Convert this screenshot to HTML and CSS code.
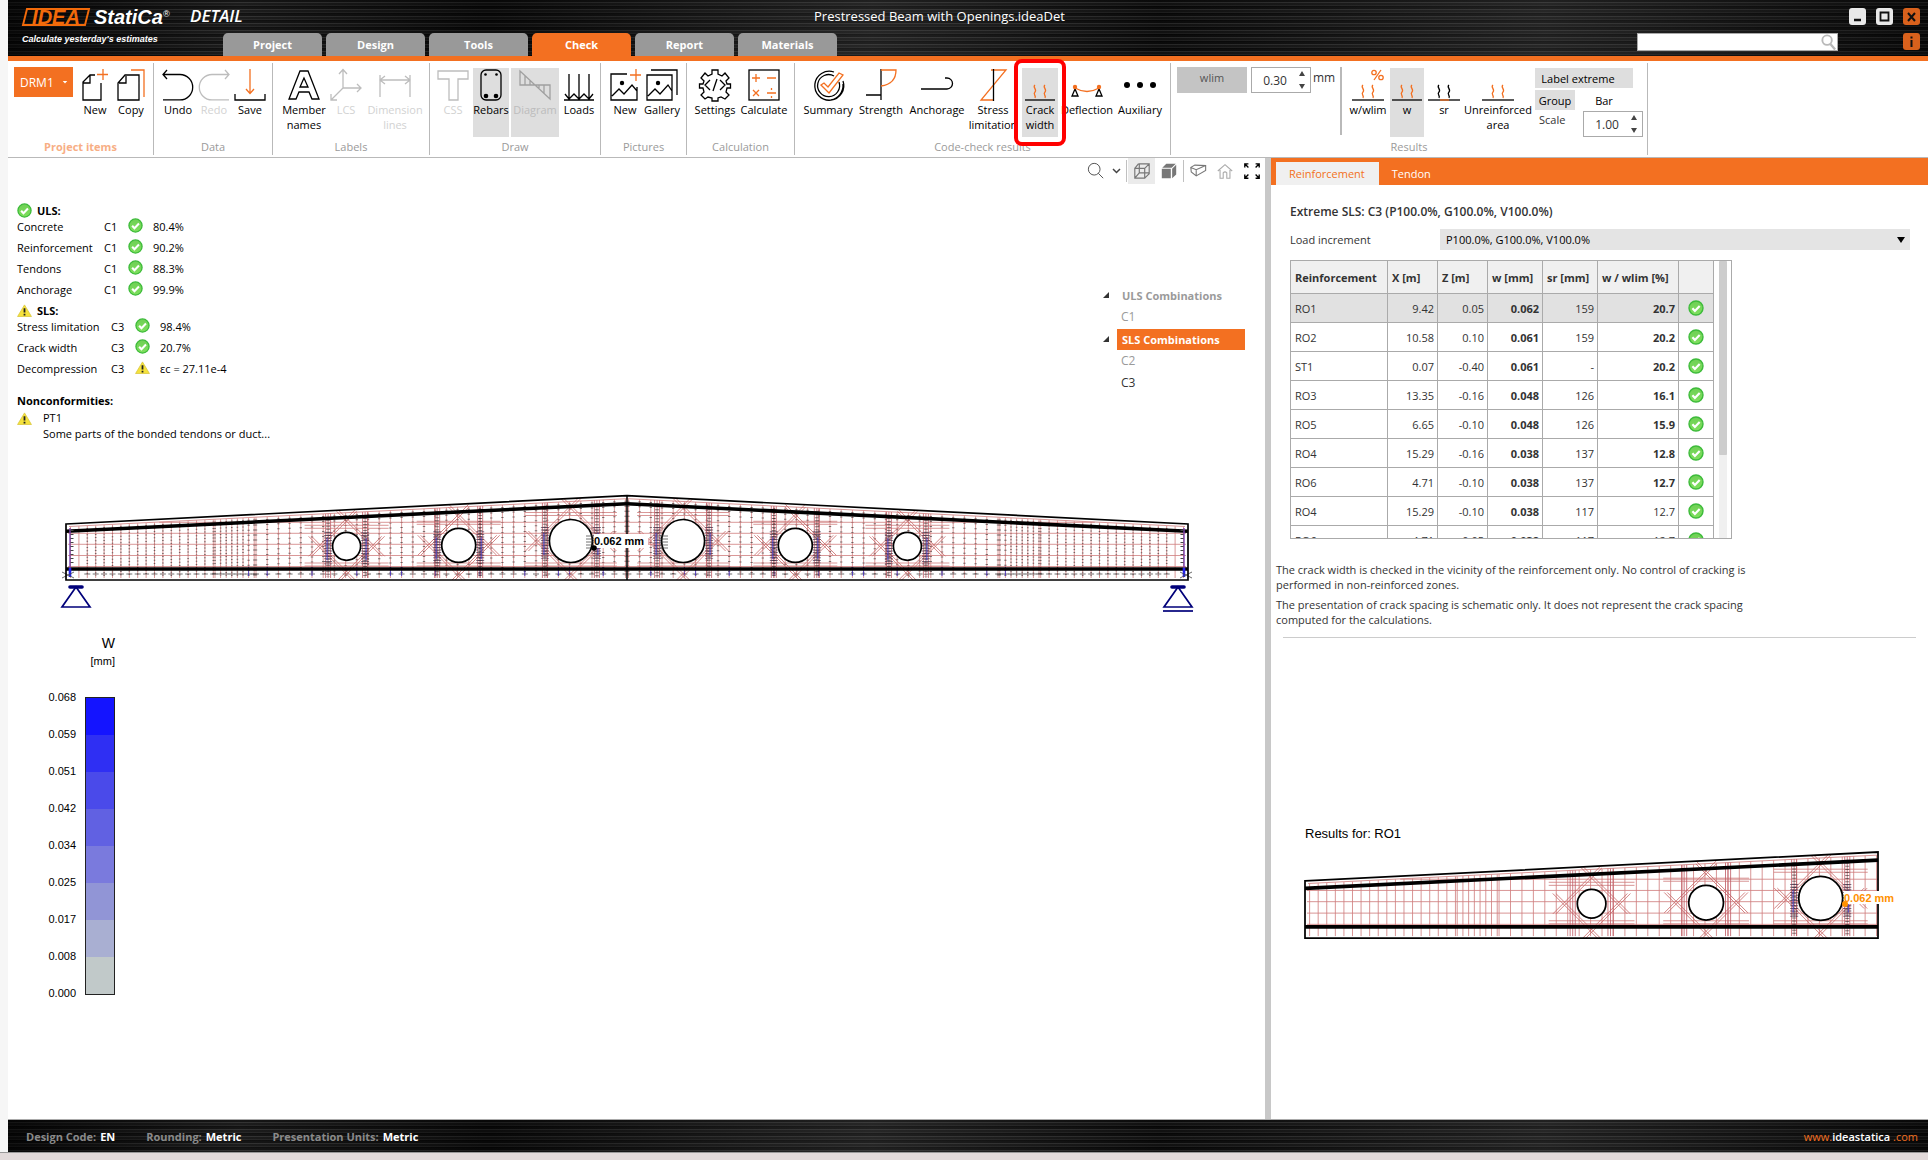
FILE: index.html
```html
<!DOCTYPE html>
<html lang="en">
<head>
<meta charset="utf-8">
<title>Prestressed Beam with Openings.ideaDet</title>
<link rel="stylesheet" href="styles.css">
</head>
<body>
<svg class="defs" aria-hidden="true">
  <defs>
    <linearGradient id="okFill" x1="0" y1="0" x2="0" y2="1"><stop offset="0" stop-color="#6fcf55"/><stop offset="1" stop-color="#7fe05e"/></linearGradient>
    <symbol id="ok" viewBox="0 0 16 16"><circle cx="8" cy="8" r="7" fill="url(#okFill)" stroke="#3dbb3a" stroke-width="1.4"/><path d="M4.4 8.2l2.5 2.7 4.8-5" fill="none" stroke="#fff" stroke-width="2.2"/></symbol>
    <symbol id="warn" viewBox="0 0 16 16"><path d="M8 2l7.4 12.4H.6z" fill="#f5e23c" stroke="#d8c63a" stroke-width=".8"/><path d="M8 5.6v4.6M8 11.4v1.8" stroke="#222" stroke-width="1.9"/></symbol>
    <symbol id="cracks" viewBox="0 0 32 32"><path d="M11 16c-3 2 2.500 4.500 0 7s1.500 3.500 0 6M21 16c-3 2 2.500 4.500 0 7s1.500 3.500 0 6"/></symbol>
    <clipPath id="inside"><path d="M0 44L561 15.7V100H0z"/></clipPath>
  </defs>
</svg>

<div class="app">
  <header class="top">
    <div class="top-row">
      <div class="brand">
        <span class="logo-box"><span class="logo-text">IDEA</span></span>
        <span class="logo-name">StatiCa<sup>®</sup></span>
        <span class="logo-mod">DETAIL</span>
      </div>
      <h1 class="doc-title">Prestressed Beam with Openings.ideaDet</h1>
      <div class="win">
        <button class="win-btn" aria-label="Minimize"><svg viewBox="0 0 17 17"><path d="M5 12h7" stroke="#111" stroke-width="2.500"/></svg></button>
        <button class="win-btn" aria-label="Maximize"><svg viewBox="0 0 17 17"><path d="M4.500 4.500h8v8h-8z" fill="none" stroke="#111" stroke-width="1.800"/></svg></button>
        <button class="win-btn hot" aria-label="Close"><svg viewBox="0 0 17 17"><path d="M5 5l7 8M12 5l-7 8" stroke="#111" stroke-width="2"/></svg></button>
      </div>
    </div>
    <div class="top-row second">
      <p class="tagline">Calculate yesterday's estimates</p>
      <nav class="tabs">
        <a href="#">Project</a><a href="#">Design</a><a href="#">Tools</a><a href="#" class="on">Check</a><a href="#">Report</a><a href="#">Materials</a>
      </nav>
      <div class="search"><input type="text" aria-label="Search"><svg viewBox="0 0 18 18"><circle cx="7.500" cy="6.500" r="5" fill="none" stroke="#b9b9b9" stroke-width="2"/><path d="M11 10.500l5 6" stroke="#b9b9b9" stroke-width="2.500"/></svg></div>
      <button class="win-btn hot" aria-label="Info"><svg viewBox="0 0 17 17"><path d="M8.500 3.500v2M8.500 7v7" stroke="#111" stroke-width="2"/></svg></button>
    </div>
  </header>

  <section class="ribbon">
    <div class="group g-items">
      <div class="tools">
        <button class="item-pick">DRM1 <svg viewBox="0 0 8 8"><path d="M1 2.500h6L4 6z" fill="#fff"/></svg></button>
        <button class="tool"><svg viewBox="0 0 32 32"><path d="M22 14v17H4V13l7-7h5M4 14h7V6"/><path class="o" d="M24 0v11M18 5.500h11"/></svg>New</button>
        <button class="tool"><svg viewBox="0 0 32 32"><path d="M24 6v25H3V14l7-8zM4 14h7V7"/><path class="o" d="M16 1h13v27"/></svg>Copy</button>
      </div>
      <h2>Project items</h2>
    </div>
    <div class="group g-data">
      <div class="tools">
        <button class="tool"><svg viewBox="0 0 32 32"><path d="M5 1L1 5.500 5 10M1 5.500h17a12.700 12.700 0 0 1 0 25.400H1"/></svg>Undo</button>
        <button class="tool off"><svg viewBox="0 0 32 32"><path d="M27 1l4 4.500-4 4.500M31 5.500H14a12.700 12.700 0 0 0 0 25.400h17"/></svg>Redo</button>
        <button class="tool"><svg viewBox="0 0 32 32"><path d="M1 25v6h30v-6"/><path class="o" d="M16 0v24M12 20l4 4.500 4-4.500"/></svg>Save</button>
      </div>
      <h2>Data</h2>
    </div>
    <div class="group g-labels">
      <div class="tools">
        <button class="tool w48"><svg viewBox="0 0 32 32"><path d="M12 2h8l11 28h-7l-3-7H11l-3 7H1zM16 9l-4 9h8z"/></svg>Member names</button>
        <button class="tool off"><svg viewBox="0 0 32 32"><path d="M13 19V1M9 5l4-4.500L17 5M13 19h18M27 15l4 4-4 4M13 19L1 31M1 25v6h6"/></svg>LCS</button>
        <button class="tool off w62"><svg viewBox="0 0 32 32"><path d="M1 6v22M31 6v22M1 11h30M6 7l-5 4 5 4M26 7l5 4-5 4"/></svg>Dimension lines</button>
      </div>
      <h2>Labels</h2>
    </div>
    <div class="group g-draw">
      <div class="tools">
        <button class="tool off"><svg viewBox="0 0 32 32"><path d="M1 2h30v8H21v21h-9V10H1z"/></svg>CSS</button>
        <button class="tool sel"><svg viewBox="0 0 32 32"><rect x="6" y="1" width="20" height="30" rx="5"/><g fill="currentColor" stroke="none"><circle cx="10.500" cy="5.500" r="1.300"/><circle cx="21.500" cy="5.500" r="1.300"/><circle cx="11" cy="27" r="2.300"/><circle cx="21" cy="27" r="2.300"/></g></svg>Rebars</button>
        <button class="tool sel off w48"><svg viewBox="0 0 32 32"><path d="M1 16V2l30 28V16zM6 16V7M11 16v-4M20 16v3M25 16v8"/></svg>Diagram</button>
        <button class="tool"><svg viewBox="0 0 32 32"><path d="M1 31h30M6 5v24M16 5v24M26 5v24M2 25l4 5 5-5 5 5 5-5 5 5 4-5"/></svg>Loads</button>
      </div>
      <h2>Draw</h2>
    </div>
    <div class="group g-pics">
      <div class="tools">
        <button class="tool"><svg viewBox="0 0 32 32"><path d="M18 5H2v26h26V18M3 27l7-7 5 5 8-9 5 6"/><circle cx="13" cy="14" r="2.200" fill="currentColor" stroke="none"/><path class="o" d="M27 0v12M21 6h11"/></svg>New</button>
        <button class="tool"><svg viewBox="0 0 32 32"><path d="M1 6h25v25H1zM5 1h26v25M2 27l7-7 5 5 8-9 4 6"/><circle cx="12" cy="14" r="2.200" fill="currentColor" stroke="none"/></svg>Gallery</button>
      </div>
      <h2>Pictures</h2>
    </div>
    <div class="group g-calc">
      <div class="tools">
        <button class="tool w48"><svg viewBox="0 0 32 32"><path d="M13 1h6v4l4 2 3-3 4 5-3 3 1 3h3.500v4H28l-1 4 3 3-4 4-4-2-3 1v3h-6v-3l-4-1-3 2-4-4 3-3-1-4H.5v-4H4l1-3-3-3 4-5 3 3 4-2zM11 11l-5 5 5 5M21 11l5 5-5 5M18 10l-4 12"/></svg>Settings</button>
        <button class="tool w48"><svg viewBox="0 0 32 32"><rect x="1" y="1" width="30" height="30"/><path class="o" d="M8 5v8M4 9h8M19 9h9M5 21l6 6M11 21l-6 6M19 24h9M23.500 19v2M23.500 27v2"/></svg>Calculate</button>
      </div>
      <h2>Calculation</h2>
    </div>
    <div class="group g-check">
      <div class="tools">
        <button class="tool w48"><svg viewBox="0 0 32 32"><path d="M22 3a14.500 14.500 0 1 0 9 9M22 7a11 11 0 1 0 5 6M31 15a15 15 0 0 1-12 16"/><path class="o" d="M9 16l3-2 4 4 11-14 4 2-14 18z"/></svg>Summary</button>
        <button class="tool w48"><svg viewBox="0 0 32 32"><path d="M16 0v31M1 26h15"/><path class="o" d="M16 1h15q0 14-15 16"/></svg>Strength</button>
        <button class="tool w54"><svg viewBox="0 0 32 32"><path d="M0 20h26a5.300 5.300 0 0 0 0-11h-2"/></svg>Anchorage</button>
        <button class="tool w48"><svg viewBox="0 0 32 32"><path class="o" d="M14 1h15L4 31h13"/><path d="M16.500 0v32"/></svg>Stress limitation</button>
        <button class="tool sel marked"><svg viewBox="0 0 32 32"><use class="o" href="#cracks"/><path d="M1 31h30"/></svg>Crack width</button>
        <button class="tool w48"><svg viewBox="0 0 32 32"><path d="M4 20l-3 7h6zM28 20l-3 7h6z"/><path class="o" d="M4 19q12 7 24 0"/><g class="of"><circle cx="4" cy="18" r="2.200"/><circle cx="28" cy="18" r="2.200"/></g></svg>Deflection</button>
        <button class="tool w48"><svg viewBox="0 0 32 32"><g fill="currentColor" stroke="none"><circle cx="3" cy="16" r="3"/><circle cx="16" cy="16" r="3"/><circle cx="29" cy="16" r="3"/></g></svg>Auxiliary</button>
      </div>
      <h2>Code-check results</h2>
    </div>
    <div class="group g-results">
      <div class="tools">
        <button class="wlim">wlim</button>
        <label class="spin"><input type="text" value="0.30" aria-label="Crack width limit"><svg viewBox="0 0 8 20"><path d="M4 1l3 5H1zM4 19l3-5H1z" fill="#444"/></svg></label>
        <span class="unit">mm</span>
        <span class="rule"></span>
        <button class="tool"><svg viewBox="0 0 32 32"><use class="o" href="#cracks"/><path class="o" d="M29 1l-7 10"/><circle class="o" cx="22" cy="3.500" r="2.200"/><circle class="o" cx="29" cy="8.500" r="2.200"/><path d="M0 31h32"/></svg>w/wlim</button>
        <button class="tool sel"><svg viewBox="0 0 32 32"><use class="o" href="#cracks"/><path d="M1 31h30"/></svg>w</button>
        <button class="tool"><svg viewBox="0 0 32 32"><use href="#cracks"/><path d="M0 31h32"/><path class="o" d="M12 31h9"/></svg>sr</button>
        <button class="tool w72"><svg viewBox="0 0 32 32"><use class="o" href="#cracks"/><path d="M0 31h32"/></svg>Unreinforced area</button>
        <div class="opts">
          <button class="opt on wide">Label extreme</button>
          <div class="opt-row"><button class="opt on">Group</button><button class="opt bar">Bar</button></div>
          <div class="opt-row"><label class="scale" for="scale">Scale</label><span class="spin"><input id="scale" type="text" value="1.00"><svg viewBox="0 0 8 20"><path d="M4 1l3 5H1zM4 19l3-5H1z" fill="#444"/></svg></span></div>
        </div>
      </div>
      <h2>Results</h2>
    </div>
  </section>

  <main class="work">
    <section class="view">
      <div class="view-tools">
        <button aria-label="Zoom"><svg viewBox="0 0 20 20"><circle cx="8" cy="8" r="6.500" fill="none" stroke="#444"/><path d="M12.500 12.500L18 18" stroke="#444"/></svg></button>
        <button class="slim" aria-label="Zoom options"><svg viewBox="0 0 10 20"><path d="M1 8l3.500 3.500L8 8" fill="none" stroke="#444" stroke-width="1.500"/></svg></button>
        <span class="bar-rule"></span>
        <button class="on" aria-label="Wireframe"><svg viewBox="0 0 20 20"><path d="M2 7h11v11H2zM6 2h12v11l-5 5M2 7l4-5M13 7l5-5M7 2v10h11M2 18l5-6" fill="none" stroke="#777" stroke-width="1.300"/></svg></button>
        <button aria-label="Solid"><svg viewBox="0 0 20 20"><path d="M2 7.500h10V18H2zM13.500 7.500L18 3v11l-4.500 4zM2.500 6.500L7 2h10.500L13 6.500z" fill="#777"/></svg></button>
        <span class="bar-rule"></span>
        <button class="mid" aria-label="Perspective"><svg viewBox="0 0 20 20"><path d="M2 6l4.500-2.500L18.500 4v5.500L8 15.500 2.500 11zM2 6l6 2.500L18.500 4M8 8.500v7" fill="none" stroke="#777" stroke-width="1.200"/></svg></button>
        <button aria-label="Home view"><svg viewBox="0 0 20 20"><path d="M2 10l8-7 8 7M4.500 9v9h3.500v-6q2-2 4 0v6h3.500V9" fill="none" stroke="#aaa" stroke-width="1.200"/></svg></button>
        <button aria-label="Full screen"><svg viewBox="0 0 20 20"><path d="M2 6V2h4M2 2l4 4M18 6V2h-4M18 2l-4 4M2 14v4h4M2 18l4-4M18 14v4h-4M18 18l-4-4" fill="none" stroke="#000" stroke-width="1.500"/></svg></button>
      </div>

      <div class="overlays">
        <div class="status">
          <h3><svg><use href="#ok"/></svg>ULS:</h3>
          <table class="uls">
            <tr><td>Concrete</td><td>C1</td><td><svg><use href="#ok"/></svg></td><td>80.4%</td></tr>
            <tr><td>Reinforcement</td><td>C1</td><td><svg><use href="#ok"/></svg></td><td>90.2%</td></tr>
            <tr><td>Tendons</td><td>C1</td><td><svg><use href="#ok"/></svg></td><td>88.3%</td></tr>
            <tr><td>Anchorage</td><td>C1</td><td><svg><use href="#ok"/></svg></td><td>99.9%</td></tr>
          </table>
          <h3><svg><use href="#warn"/></svg>SLS:</h3>
          <table class="sls">
            <tr><td>Stress limitation</td><td>C3</td><td><svg><use href="#ok"/></svg></td><td>98.4%</td></tr>
            <tr><td>Crack width</td><td>C3</td><td><svg><use href="#ok"/></svg></td><td>20.7%</td></tr>
            <tr><td>Decompression</td><td>C3</td><td><svg><use href="#warn"/></svg></td><td>εc = 27.11e-4</td></tr>
          </table>
          <h3 class="nonconf">Nonconformities:</h3>
          <div class="issue"><svg><use href="#warn"/></svg><p>PT1<br>Some parts of the bonded tendons or duct...</p></div>
        </div>
        <ul class="tree">
          <li class="node"><i></i><span>ULS Combinations</span></li>
          <li>C1</li>
          <li class="node picked"><i></i><span>SLS Combinations</span></li>
          <li>C2</li>
          <li class="live">C3</li>
        </ul>
      </div>

      <svg class="beam" id="beam" viewBox="0 0 1257 140" role="img" aria-label="Beam with crack widths"></svg>

      <div class="legend">
        <div class="legend-head"><b>W</b><span>[mm]</span></div>
        <div class="legend-body">
          <ol class="ticks"><li>0.068</li><li>0.059</li><li>0.051</li><li>0.042</li><li>0.034</li><li>0.025</li><li>0.017</li><li>0.008</li><li>0.000</li></ol>
          <div class="ramp"><i></i><i></i><i></i><i></i><i></i><i></i><i></i><i></i></div>
        </div>
      </div>
    </section>

    <aside class="side">
      <nav class="side-tabs"><a href="#" class="on">Reinforcement</a><a href="#">Tendon</a></nav>
      <h3 class="side-title">Extreme SLS: C3 (P100.0%, G100.0%, V100.0%)</h3>
      <div class="field">
        <label for="inc">Load increment</label>
        <div class="pick"><select id="inc"><option>P100.0%, G100.0%, V100.0%</option></select></div>
      </div>
      <div class="grid-box">
        <table class="grid">
          <thead><tr><th class="c-name">Reinforcement</th><th class="c-x">X [m]</th><th class="c-x">Z [m]</th><th class="c-w">w [mm]</th><th class="c-w">sr [mm]</th><th class="c-lim">w / wlim [%]</th><th class="c-ok"></th></tr></thead>
          <tbody>
            <tr class="cur"><td>RO1</td><td>9.42</td><td>0.05</td><td><b>0.062</b></td><td>159</td><td><b>20.7</b></td><td><svg><use href="#ok"/></svg></td></tr>
            <tr><td>RO2</td><td>10.58</td><td>0.10</td><td><b>0.061</b></td><td>159</td><td><b>20.2</b></td><td><svg><use href="#ok"/></svg></td></tr>
            <tr><td>ST1</td><td>0.07</td><td>-0.40</td><td><b>0.061</b></td><td>-</td><td><b>20.2</b></td><td><svg><use href="#ok"/></svg></td></tr>
            <tr><td>RO3</td><td>13.35</td><td>-0.16</td><td><b>0.048</b></td><td>126</td><td><b>16.1</b></td><td><svg><use href="#ok"/></svg></td></tr>
            <tr><td>RO5</td><td>6.65</td><td>-0.10</td><td><b>0.048</b></td><td>126</td><td><b>15.9</b></td><td><svg><use href="#ok"/></svg></td></tr>
            <tr><td>RO4</td><td>15.29</td><td>-0.16</td><td><b>0.038</b></td><td>137</td><td><b>12.8</b></td><td><svg><use href="#ok"/></svg></td></tr>
            <tr><td>RO6</td><td>4.71</td><td>-0.10</td><td><b>0.038</b></td><td>137</td><td><b>12.7</b></td><td><svg><use href="#ok"/></svg></td></tr>
            <tr><td>RO4</td><td>15.29</td><td>-0.10</td><td><b>0.038</b></td><td>117</td><td>12.7</td><td><svg><use href="#ok"/></svg></td></tr>
            <tr><td>RO6</td><td>4.71</td><td>0.05</td><td><b>0.038</b></td><td>117</td><td>12.7</td><td><svg><use href="#ok"/></svg></td></tr>
          </tbody>
        </table>
        <div class="scroll"><i></i></div>
      </div>
      <div class="notes">
        <p>The crack width is checked in the vicinity of the reinforcement only. No control of cracking is performed in non-reinforced zones.</p>
        <p>The presentation of crack spacing is schematic only. It does not represent the crack spacing computed for the calculations.</p>
      </div>
      <hr>
      <p class="results-for">Results for: RO1</p>
      <svg class="detail" id="detail" viewBox="0 0 657 120" role="img" aria-label="Crack width detail for RO1"></svg>
    </aside>
  </main>

  <footer class="foot">
    <dl><div><dt>Design Code:</dt><dd>EN</dd></div><div><dt>Rounding:</dt><dd>Metric</dd></div><div><dt>Presentation Units:</dt><dd>Metric</dd></div></dl>
    <a href="#"><span>www.</span><b>ideastatica</b><span> .com</span></a>
  </footer>
</div>
<div class="desk"></div>
<script src="beam.js"></script>
</body>
</html>
```
FILE: styles.css
```css
* { box-sizing: border-box; margin: 0; padding: 0; }
body {
  display: flex; flex-direction: column; min-height: 100vh;
  font: 11px/15px "Open Sans", "Noto Sans", sans-serif; color: #000; background: #f6f6f6;
}
button, input, select { font: inherit; color: inherit; border: 0; background: none; }
a { text-decoration: none; color: inherit; }
ul, ol { list-style: none; }
svg { display: block; }
.defs { position: absolute; width: 0; height: 0; }
.app {
  flex: 1; display: flex; flex-direction: column; margin-left: 8px; background: #fff;
  overflow: hidden;
}

/* header */
.top, .foot {
  background:
    linear-gradient(90deg, rgba(0,0,0,.6), rgba(70,70,70,.15) 12%, rgba(0,0,0,.4) 25%, rgba(90,90,90,.25) 45%, rgba(0,0,0,.2) 60%, rgba(90,90,90,.25) 80%, rgba(0,0,0,.4)),
    repeating-linear-gradient(#0d0d0d 0 2px, #303030 2px 3px, #151515 3px 5px, #242424 5px 6px, #080808 6px 7px);
}
.top { height: 61px; border-bottom: 5px solid #f37021; }
.top-row { display: flex; height: 33px; align-items: flex-start; padding-right: 8px; }
.top-row.second { height: 23px; }
.brand { display: flex; align-items: center; height: 33px; width: 806px; padding-left: 16px; font-style: italic; color: #fff; }
.logo-box { display: flex; align-items: center; justify-content: center; position: relative; width: 64px; height: 18px; color: #f26a0a; }
.logo-box::before { content: ""; position: absolute; inset: 0; border: 2px solid #f26a0a; transform: skewX(-14deg); }
.logo-text { font: italic bold 20px/18px "Liberation Sans", sans-serif; }
.logo-name { width: 102px; padding-left: 6px; font: italic bold 20px/20px "Liberation Sans", sans-serif; white-space: nowrap; }
.logo-name sup { font-size: 9px; line-height: 8px; vertical-align: 7px; font-weight: normal; }
.logo-mod { font-size: 17px; font-weight: 600; line-height: 20px; padding-bottom: 1px; }
.doc-title { font-size: 13px; font-weight: 400; line-height: 32px; color: #fff; white-space: nowrap; }
.win { display: flex; gap: 10px; margin-left: auto; padding-top: 8px; }
.win-btn { width: 17px; height: 17px; border-radius: 3px; background: #e9e9e9; }
.win-btn.hot { background: #d9611c; }
.tagline { width: 215px; padding-left: 14px; font: italic bold 9px/12px "Liberation Sans", sans-serif; color: #fff; }
.tabs { display: flex; gap: 4px; height: 23px; }
.tabs a { width: 99px; border-radius: 5px 5px 0 0; background: #999; color: #fff; font-weight: 700; line-height: 23px; text-align: center; }
.tabs a.on { background: #f37021; }
.search { display: flex; width: 201px; height: 18px; margin: 0 65px 0 auto; background: #fff; border: 1px solid #aaa; }
.search input { flex: 1; min-width: 0; }
.search svg { width: 17px; height: 17px; }

/* ribbon */
.ribbon { display: flex; height: 97px; border-bottom: 1px solid #b9b9b9; padding: 2px 0; background: #fff; }
.group { display: flex; flex-direction: column; justify-content: space-between; border-right: 1px solid #b9b9b9; flex: none; padding-top: 4px; }
.group h2 { font-size: 11px; font-weight: 400; line-height: 15px; text-align: center; color: #9a9a9a; white-space: nowrap; padding-bottom: 1px; }
.g-items { width: 146px; }
.g-items h2 { color: #f7ae85; font-weight: 700; }
.g-data { width: 119px; }
.g-labels { width: 157px; }
.g-draw { width: 171px; }
.g-pics { width: 86px; }
.g-calc { width: 108px; }
.g-check { width: 376px; }
.g-results { width: 477px; }
.tools { display: flex; align-items: flex-start; height: 72px; }
.g-items .tools { padding-left: 6px; }
.g-data .tools { padding-left: 6px; }
.g-labels .tools { padding-left: 7px; }
.g-draw .tools { padding-left: 5px; gap: 2px; }
.g-pics .tools { padding-left: 6px; gap: 1px; }
.g-calc .tools { padding-left: 4px; gap: 1px; }
.g-check .tools { padding-left: 9px; gap: 5px; }
.g-results .tools { padding-left: 6px; }
.tool {
  position: relative; display: flex; flex-direction: column; align-items: center; gap: 1px;
  flex: none; width: 36px; height: 69px; margin-top: 1px; padding-top: 1px; line-height: 15px; text-align: center;
}
.tool svg { flex: none; width: 32px; height: 32px; overflow: visible; fill: none; stroke: currentColor; stroke-width: 1.3; }
.tool .o { stroke: #f37021; }
.tool .of { fill: #f37021; stroke: none; }
.w48 { width: 48px; } .w54 { width: 54px; } .w62 { width: 62px; } .w72 { width: 72px; }
.off { color: #d2d2d2; }
.off svg { color: #bdbdbd; }
.sel { background: #dedede; }
.sel.off { color: #bcbcbc; }
.sel.off svg { color: #a0a0a0; }
.marked::after { content: ""; position: absolute; inset: -9px -8px; border: 4px solid #f00; border-radius: 8px; z-index: 2; }
.item-pick { display: flex; align-items: center; justify-content: space-between; width: 59px; height: 30px; margin-right: 4px; padding: 0 5px 0 6px; background: #f37021; color: #fff; font-size: 12px; }
.item-pick svg { width: 6px; height: 8px; }
.wlim { width: 70px; height: 26px; background: #c4c4c4; color: #555; margin-right: 4px; line-height: 22px; padding-bottom: 4px; }
.spin { display: flex; align-items: center; width: 60px; height: 26px; border: 1px solid #aaa; background: #fff; color: #333; padding-right: 4px; }
.spin input { flex: 1; min-width: 0; text-align: center; font-size: 12px; }
.spin svg { width: 8px; height: 20px; }
.unit { width: 29px; padding: 3px 0 0 2px; color: #333; font-size: 12px; }
.rule { width: 2px; height: 68px; background: #b9b9b9; margin-right: 8px; }
.g-results .tool.sel { width: 34px; margin: 1px 2px 0 4px; }
.opts { margin: 1px 0 0 1px; display: flex; flex-direction: column; gap: 1px; }
.opt-row { display: flex; height: 20px; align-items: flex-start; }
.opt { width: 40px; height: 20px; white-space: nowrap; }
.opt.wide { width: 98px; padding-right: 12px; margin-bottom: 1px; }
.opt.on { background: #dedede; }
.opt.bar { width: 58px; }
.scale { width: 48px; padding: 0 0 0 4px; line-height: 18px; color: #333; }

/* work area */
.work { flex: 1; display: flex; }
.view { flex: 1 1 0; min-width: 0; border-right: 5px solid #c8c8c8; display: flex; flex-direction: column; }
.view-tools { display: flex; justify-content: flex-end; align-items: center; height: 26px; }
.view-tools button { display: flex; align-items: center; justify-content: center; width: 27px; height: 26px; }
.view-tools svg { width: 18px; height: 20px; }
.view-tools .slim { width: 16px; }
.view-tools .slim svg { width: 10px; }
.view-tools .on { background: #ebebeb; }
.view-tools .mid { width: 26px; }
.bar-rule { width: 1px; height: 22px; margin: 0 1px; background: #c0c0c0; }
.overlays { display: flex; justify-content: space-between; align-items: flex-start; height: 296px; padding: 18px 20px 0 9px; }
.status svg { width: 15px; height: 15px; }
.status h3 { display: flex; align-items: center; gap: 5px; height: 16px; font-size: 11px; font-weight: 700; }
.status table { border-collapse: collapse; table-layout: fixed; }
.status tr { height: 21px; vertical-align: top; }
.status td { white-space: nowrap; line-height: 17px; }
.status td:nth-child(2), .status td:nth-child(3) { width: 24px; }
.status td:nth-child(4) { padding-left: 1px; }
.uls td:first-child { width: 87px; }
.sls td:first-child { width: 94px; }
.status h3.nonconf { margin-top: 11px; }
.issue { display: flex; gap: 11px; margin-top: 2px; }
.issue p { line-height: 16px; }
.issue svg { margin-top: 1px; }
.tree { width: 145px; margin-top: 82px; color: #9a9a9a; }
.tree li { height: 22px; line-height: 21px; padding-left: 21px; font-size: 12px; }
.tree .live { color: #333; }
.tree .node { display: flex; align-items: center; padding-left: 0; font-weight: 700; font-size: 11px; }
.tree i { border-style: solid; border-width: 0 0 6px 6px; border-color: transparent transparent #333; margin: 0 8px 0 3px; }
.tree span { flex: 1; height: 21px; padding-left: 5px; }
.tree .picked span { background: #f37021; color: #fff; }
.beam { width: 100%; height: auto; }
.legend { width: 107px; font: 11px/15px "Liberation Sans", Arial, sans-serif; padding-top: 15px; }
.legend-head { display: flex; flex-direction: column; align-items: flex-end; height: 44px; gap: 3px; }
.legend-head b { font-size: 14px; font-weight: 400; line-height: 16px; }
.legend-body { display: flex; justify-content: flex-end; gap: 9px; }
.ticks li { height: 37px; line-height: 37px; }
.ramp { width: 30px; height: 298px; margin-top: 18px; border: 1px solid #222; display: flex; flex-direction: column; }
.ramp i { flex: 1; background: #1414ff; }
.ramp i:nth-child(2) { background: #2f2ff3; }
.ramp i:nth-child(3) { background: #4a4aea; }
.ramp i:nth-child(4) { background: #6161e2; }
.ramp i:nth-child(5) { background: #7a7add; }
.ramp i:nth-child(6) { background: #9195d6; }
.ramp i:nth-child(7) { background: #a9afd2; }
.ramp i:nth-child(8) { background: #c1c9c9; }

/* side panel */
.side { flex: 0 1 658px; min-width: 0; color: #333; border-left: 1px solid #c8c8c8; }
.side-tabs { display: flex; align-items: flex-end; height: 27px; padding-left: 5px; background: #f37021; color: #fff; }
.side-tabs a { height: 23px; padding: 0 14px 0 13px; line-height: 23px; }
.side-tabs a.on { background: #f0f0f0; color: #f37021; }
.side-title { padding: 18px 0 0 19px; font-size: 12px; line-height: 17px; font-weight: 600; }
.field { display: flex; align-items: center; margin: 9px 18px 0 19px; }
.field label { width: 150px; }
.pick { flex: 1; position: relative; height: 21px; background: #e4e4e4; color: #000; }
.pick::after { content: ""; position: absolute; right: 5px; top: 8px; border-style: solid; border-width: 6px 4px 0; border-color: #000 transparent transparent; }
.pick select { width: 100%; height: 21px; appearance: none; padding-left: 6px; }
.grid-box { display: flex; width: 442px; height: 279px; margin: 10px 0 0 19px; overflow: hidden; border: 1px solid #aaa; }
.grid { border-collapse: collapse; table-layout: fixed; width: 424px; height: max-content; flex: none; margin: -1px 0 0 -1px; }
.grid th, .grid td { border: 1px solid #aaa; height: 29px; padding: 0 3px; text-align: right; white-space: nowrap; }
.grid th { height: 33px; background: #f0f0f0; text-align: left; padding: 0 0 0 4px; font-weight: 700; }
.grid td:first-child { text-align: left; padding-left: 4px; }
.grid td:last-child { padding: 0 9px; }
.grid svg { width: 16px; height: 16px; }
.cur { background: #e1e1e1; }
.c-name { width: 97px; } .c-x { width: 50px; } .c-w { width: 55px; } .c-lim { width: 81px; } .c-ok { width: 35px; }
.scroll { width: 8px; margin-left: 5px; background: #f0f0f0; }
.scroll i { display: block; height: 194px; background: #cdcdcd; border-radius: 1px; }
.notes { width: 510px; padding: 23px 0 0 5px; }
.notes p { margin-bottom: 5px; }
hr { border: 0; border-top: 1px solid #ccc; margin: 10px 12px 0 12px; }
.results-for { margin: 187px 0 0 34px; font: 13px/18px "Liberation Sans", Arial, sans-serif; color: #000; }
.detail { width: 100%; height: auto; overflow: hidden; }

/* footer */
.foot { display: flex; justify-content: space-between; align-items: center; height: 33px; border-top: 1px solid #aaa; padding: 0 10px 0 18px; font-size: 11px; color: #8a8a8a; font-weight: 700; }
.foot dl { display: flex; gap: 31px; }
.foot dl div { display: flex; gap: 4px; }
.foot dd, .foot b { color: #fff; }
.foot a { color: #f37021; font-weight: 400; }
.foot b { font-weight: 600; }
.desk { height: 8px; border-top: 1px solid #999; background: #e2dada; }
```
FILE: beam.js
```js
// Draws the reinforced beam and the half-beam detail.
const openings = [
  { x: 280.6, y: 66.3, r: 14 },
  { x: 392.7, y: 65.3, r: 17 },
  { x: 504.9, y: 61, r: 21.5 },
];
const red = "#cf7d7d";
const topAt = x => 44 - (x / 561) * 28.3;
const line = (x1, y1, x2, y2, color, width, extra = "") =>
  `<path d="M${x1.toFixed(1)} ${y1.toFixed(1)}L${x2.toFixed(1)} ${y2.toFixed(1)}" stroke="${color}" stroke-width="${width}" ${extra}/>`;

function stirrupPositions() {
  const xs = [];
  for (let x = 4.5; x < 148; x += 8.4) xs.push(x);
  for (let x = 149; x < 190; x += 5.6) xs.push(x);
  for (let x = 190; x < 561; x += 11.2) xs.push(x);
  return xs;
}

function halfBeam(full) {
  let s = "";
  for (const x of stirrupPositions()) {
    s += line(x, topAt(x) + 3, x, 98, red, 0.8);
    if (full && x > 15) {
      s += line(x, topAt(x) + 5, x, 96, "#222", x > 180 ? 2.4 : 1.6, `stroke-dasharray="1 ${x > 180 ? 4 : 2.2}" opacity=".55"`);
      s += line(x - 3, 94, x + 3, 94, "#333", 0.7);
      if (x > 180 && Math.round(x) % 3 === 0) s += line(x, 86, x, 96, "#3a2fd0", 0.8);
    }
  }
  for (const y of [42.3, 53.3, 64.3, 75.5, 86.5]) {
    const start = Math.max(2, ((44 - y + 3) / 28.3) * 561);
    s += line(start, y, 561, y, red, 0.8);
  }
  s += line(3, 46.5, 561, 18.7, red, 0.8);

  openings.forEach((o, i) => {
    // Diagonal trimming bars cross at the four tips of a diamond round the opening.
    const tip = o.r + 12;
    const over = 10;
    for (const k of [0, 3]) {
      for (const [sx, sy] of [[1, 1], [1, -1], [-1, 1], [-1, -1]]) {
        const q = tip + k - 1;
        s += line(o.x - sx * over, o.y + sy * (q + over), o.x + sx * (q + over), o.y - sy * over, "#c96a6a", 0.8);
      }
      const w = i === 2 ? 46 : 42;
      s += line(o.x - w, o.y - o.r - 4 - k, o.x + w, o.y - o.r - 4 - k, red, 0.8);
      s += line(o.x - w, 83 + k, o.x + w, 83 + k, red, 0.8);
    }
    for (const side of [-1, 1]) {
      for (const k of [2, 4.5, 7]) {
        const x = o.x + side * (o.r + k);
        s += line(x, topAt(x) + 3, x, 98, "#c05c66", 0.8);
      }
      if (full || i === 2) {
        const x = o.x + side * (o.r + 4.5);
        s += line(x, topAt(x) + 6, x, 97, "#111", 4, 'stroke-dasharray="1 2" opacity=".5"');
        s += line(x, o.y - 14, x, o.y + 18, "#2a1d3a", 8, 'stroke-dasharray="1 1.6" opacity=".6"');
        s += line(x + side, o.y - 8, x + side, o.y + 14, "#4a3fc0", 1);
      }
    }
  });
  s = `<g clip-path="url(#inside)">${s}</g>`;

  s += line(0, 51.3, 561, 23.7, "#000", 3.6);
  s += line(0, 89, 561, 89, "#000", 3.6);
  if (full) {
    s += line(4, 48, 4, 88, "#7a3fb0", 1.4);
    s += line(4, 88, 4, 97, "#2222ee", 2.6);
    s += line(6, 50, 6, 86, "#444", 3, 'stroke-dasharray="1 3"');
    s += line(-4, 92, 8, 98, "#444", 0.8) + line(-4, 98, 8, 92, "#444", 0.8);
  }
  for (const o of openings) s += `<circle cx="${o.x}" cy="${o.y}" r="${o.r}" fill="#fff" stroke="#000" stroke-width="1.7"/>`;
  if (full) s += [-6, -3, 0, 3, 6].map(k => line(520, 62 + k, 528, 62 + k, "#333", 0.7)).join("");
  return s;
}

const support = (x, roller) =>
  `<g transform="translate(${x} 0)" fill="none" stroke="#00007a" stroke-width="1.7"><path d="M-6 107h12" stroke-width="3.6" stroke-linecap="round"/><path d="M0 107L-14 127H14z"/>${roller ? '<path d="M-15 131H15"/>' : ""}</g>`;

const half = halfBeam(true);
document.getElementById("beam").innerHTML = `
  <g transform="translate(58 0)" fill="none">
    ${half}<g transform="translate(1122 0) scale(-1 1)">${half}</g>
    <path d="M0 44L561 15.7L1122 44V100H0z" stroke="#000" stroke-width="1.7"/>
    <path d="M561 15.7V100" stroke="#000" stroke-width="1.5"/>
  </g>
  ${support(68, false)}${support(1170, true)}
  <rect x="586" y="54" width="54" height="14" fill="#fff"/>
  <circle cx="586" cy="68" r="2.8" fill="#000"/>
  <text x="586" y="65" font-family="Liberation Sans, Arial, sans-serif" font-size="11" font-weight="700">0.062 mm</text>`;

document.getElementById("detail").innerHTML = `
  <g transform="translate(34 -7) scale(1.0214)" fill="none">
    ${halfBeam(false)}
    <path d="M0 44L561 15.7V100H0z" stroke="#000" stroke-width="1.7"/>
  </g>
  <rect x="573" y="48" width="52" height="13" fill="#fff"/>
  <circle cx="574" cy="61" r="3" fill="#ff9100"/>
  <text x="573" y="59" font-family="Liberation Sans, Arial, sans-serif" font-size="11" font-weight="700" fill="#ff9100">0.062 mm</text>`;
```
